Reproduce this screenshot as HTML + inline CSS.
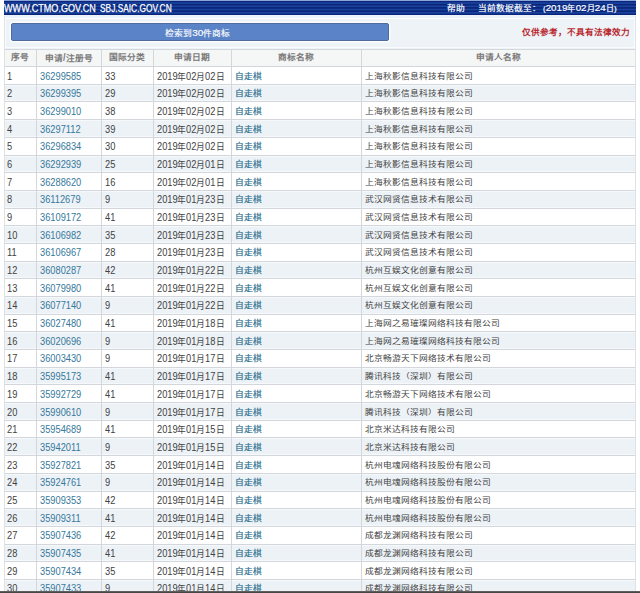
<!DOCTYPE html>
<html lang="zh-CN"><head><meta charset="utf-8">
<style>
html,body{margin:0;padding:0;}
body{width:640px;height:593px;overflow:hidden;position:relative;background:#fff;font-family:"Liberation Sans",sans-serif;}
.a{position:absolute;white-space:nowrap;}
.hb{position:absolute;left:4px;top:1px;width:632px;height:13.8px;background:repeating-linear-gradient(180deg,#0a257a 0px,#0a257a 0.8px,#1a449e 1.8px,#1a449e 2.4px,#0a257a 3.25px);}
.ht{top:2.0px !important;}
.hbtop{position:absolute;left:4px;top:0;width:632px;height:1px;background:#8ba5da;}
.ht{color:#fff;font-size:10.7px;line-height:13.8px;top:1px;}
.panel{position:absolute;left:4px;top:15px;width:631.5px;height:33.7px;background:#eef3f8;}
.btn{position:absolute;left:11px;top:23.4px;width:378px;height:17.4px;background:#5b84c8;border-radius:2px;box-sizing:border-box;border:1px solid #4f6c9c;box-shadow:0 0 0 1.5px #f9fbfe;}
.red{color:#b8282e;font-weight:bold;font-size:8.6px;transform:scaleY(0.88);transform-origin:0 12px;}
.row{position:absolute;left:4px;width:631.5px;}
.hl{position:absolute;left:4px;width:631.5px;height:1px;background:#d3d7db;}
.vl{position:absolute;width:1px;background:#d3d7db;}
.c{position:absolute;font-size:8.72px;color:#424242;}
.lk{color:#36789a;}
.zq{font-weight:normal;color:#357592;-webkit-text-stroke:0.25px #357592;}
.k{display:inline-block;transform:scaleY(0.86);transform-origin:0 12.5px;}
.hd{color:#7a7a7a;text-align:center;font-weight:bold;}
.d{font-size:10.0px;display:inline-block;transform:scaleX(0.9275);transform-origin:0 0;}
</style></head><body>

<div class="hbtop"></div><div class="hb"></div>
<div class="a ht" style="left:3.6px;font-size:10.7px;transform:scaleX(0.849);transform-origin:0 0;-webkit-text-stroke:0.25px #fff">WWW.CTMO.GOV.CN</div>
<div class="a ht" style="left:99.6px;font-size:10.7px;transform:scaleX(0.782);transform-origin:0 0;-webkit-text-stroke:0.25px #fff">SBJ.SAIC.GOV.CN</div>
<div class="a ht" style="left:447px;font-size:8.72px;-webkit-text-stroke:0.2px #fff;transform:scaleY(0.86);transform-origin:0 11px">帮助</div>
<div class="a ht" style="left:478.1px;font-size:8.72px;-webkit-text-stroke:0.2px #fff;transform:scaleY(0.86);transform-origin:0 11px">当前数据截至：</div>
<div class="a ht" style="left:542.5px;font-size:8.72px;transform:scale(0.915,0.9);transform-origin:0 11px;margin-top:-0.9px;-webkit-text-stroke:0.2px #fff">(<span style="font-size:10.7px">2019</span>年<span style="font-size:10.7px">02</span>月<span style="font-size:10.7px">24</span>日)</div>
<div class="panel"></div>
<div class="a" style="left:4px;top:15px;width:631.5px;height:3.2px;background:#e9f3f9"></div>
<div class="a" style="left:4px;top:18.2px;width:631.5px;height:1px;background:#fff"></div>
<div class="btn"></div>
<div class="a" style="left:165.3px;top:23.8px;line-height:17.4px;font-size:8.72px;color:#fff;-webkit-text-stroke:0.15px #fff;transform:scaleY(0.87);transform-origin:0 12px">检索到<span style="font-size:10.0px">30</span>件商标</div>
<div class="a" style="left:4px;top:47.2px;width:631.5px;height:1px;background:#fafcfe"></div>
<div class="a red" style="right:10.399999999999977px;top:24.4px;line-height:17px">仅供参考，不具有法律效力</div>
<div class="row" style="top:48.7px;height:17.39999999999999px;background:#f5f6f6"></div>
<div class="row" style="top:83.78px;height:17.68px;background:#edf2f7;box-shadow:inset 0 2px #f6f9fb, inset 0 -1px #f6f9fb"></div>
<div class="row" style="top:119.15px;height:17.68px;background:#edf2f7;box-shadow:inset 0 2px #f6f9fb, inset 0 -1px #f6f9fb"></div>
<div class="row" style="top:154.52px;height:17.68px;background:#edf2f7;box-shadow:inset 0 2px #f6f9fb, inset 0 -1px #f6f9fb"></div>
<div class="row" style="top:189.89px;height:17.68px;background:#edf2f7;box-shadow:inset 0 2px #f6f9fb, inset 0 -1px #f6f9fb"></div>
<div class="row" style="top:225.26px;height:17.68px;background:#edf2f7;box-shadow:inset 0 2px #f6f9fb, inset 0 -1px #f6f9fb"></div>
<div class="row" style="top:260.62px;height:17.68px;background:#edf2f7;box-shadow:inset 0 2px #f6f9fb, inset 0 -1px #f6f9fb"></div>
<div class="row" style="top:295.99px;height:17.68px;background:#edf2f7;box-shadow:inset 0 2px #f6f9fb, inset 0 -1px #f6f9fb"></div>
<div class="row" style="top:331.36px;height:17.68px;background:#edf2f7;box-shadow:inset 0 2px #f6f9fb, inset 0 -1px #f6f9fb"></div>
<div class="row" style="top:366.73px;height:17.68px;background:#edf2f7;box-shadow:inset 0 2px #f6f9fb, inset 0 -1px #f6f9fb"></div>
<div class="row" style="top:402.10px;height:17.68px;background:#edf2f7;box-shadow:inset 0 2px #f6f9fb, inset 0 -1px #f6f9fb"></div>
<div class="row" style="top:437.46px;height:17.68px;background:#edf2f7;box-shadow:inset 0 2px #f6f9fb, inset 0 -1px #f6f9fb"></div>
<div class="row" style="top:472.83px;height:17.68px;background:#edf2f7;box-shadow:inset 0 2px #f6f9fb, inset 0 -1px #f6f9fb"></div>
<div class="row" style="top:508.20px;height:17.68px;background:#edf2f7;box-shadow:inset 0 2px #f6f9fb, inset 0 -1px #f6f9fb"></div>
<div class="row" style="top:543.57px;height:17.68px;background:#edf2f7;box-shadow:inset 0 2px #f6f9fb, inset 0 -1px #f6f9fb"></div>
<div class="row" style="top:578.94px;height:17.68px;background:#edf2f7;box-shadow:inset 0 2px #f6f9fb, inset 0 -1px #f6f9fb"></div>
<div class="hl" style="top:48.70px"></div>
<div class="hl" style="top:66.10px"></div>
<div class="hl" style="top:83.78px"></div>
<div class="hl" style="top:101.47px"></div>
<div class="hl" style="top:119.15px"></div>
<div class="hl" style="top:136.84px"></div>
<div class="hl" style="top:154.52px"></div>
<div class="hl" style="top:172.20px"></div>
<div class="hl" style="top:189.89px"></div>
<div class="hl" style="top:207.57px"></div>
<div class="hl" style="top:225.26px"></div>
<div class="hl" style="top:242.94px"></div>
<div class="hl" style="top:260.62px"></div>
<div class="hl" style="top:278.31px"></div>
<div class="hl" style="top:295.99px"></div>
<div class="hl" style="top:313.68px"></div>
<div class="hl" style="top:331.36px"></div>
<div class="hl" style="top:349.04px"></div>
<div class="hl" style="top:366.73px"></div>
<div class="hl" style="top:384.41px"></div>
<div class="hl" style="top:402.10px"></div>
<div class="hl" style="top:419.78px"></div>
<div class="hl" style="top:437.46px"></div>
<div class="hl" style="top:455.15px"></div>
<div class="hl" style="top:472.83px"></div>
<div class="hl" style="top:490.52px"></div>
<div class="hl" style="top:508.20px"></div>
<div class="hl" style="top:525.88px"></div>
<div class="hl" style="top:543.57px"></div>
<div class="hl" style="top:561.25px"></div>
<div class="hl" style="top:578.94px"></div>
<div class="hl" style="top:596.62px"></div>
<div class="vl" style="left:36.40px;top:48.70px;height:544.30px"></div>
<div class="vl" style="left:101.20px;top:48.70px;height:544.30px"></div>
<div class="vl" style="left:153.20px;top:48.70px;height:544.30px"></div>
<div class="vl" style="left:231.20px;top:48.70px;height:544.30px"></div>
<div class="vl" style="left:361.30px;top:48.70px;height:544.30px"></div>
<div class="c hd" style="left:4.00px;width:32.40px;top:48.70px;line-height:17.40px"><span class="k">序号</span></div>
<div class="c hd" style="left:36.40px;width:64.80px;top:48.70px;line-height:17.40px"><span class="k">申请</span><span class="d" style="margin-right:-0.202px">/</span><span class="k">注册号</span></div>
<div class="c hd" style="left:101.20px;width:52.00px;top:48.70px;line-height:17.40px"><span class="k">国际分类</span></div>
<div class="c hd" style="left:153.20px;width:78.00px;top:48.70px;line-height:17.40px"><span class="k">申请日期</span></div>
<div class="c hd" style="left:231.20px;width:130.10px;top:48.70px;line-height:17.40px"><span class="k">商标名称</span></div>
<div class="c hd" style="left:361.30px;width:274.20px;top:48.70px;line-height:17.40px"><span class="k">申请人名称</span></div>
<div class="c" style="left:7.30px;top:67.50px;line-height:17.68px"><span class="d" style="margin-right:-0.403px">1</span></div>
<div class="c lk" style="left:39.70px;top:67.50px;line-height:17.68px"><span class="d" style="margin-right:-3.225px">36299585</span></div>
<div class="c" style="left:104.50px;top:67.50px;line-height:17.68px"><span class="d" style="margin-right:-0.806px">33</span></div>
<div class="c" style="left:156.50px;top:67.50px;line-height:17.68px"><span class="d" style="margin-right:-1.612px">2019</span><span class="k2">年</span><span class="d" style="margin-right:-0.806px">02</span><span class="k2">月</span><span class="d" style="margin-right:-0.806px">02</span><span class="k2">日</span></div>
<div class="c lk zq" style="left:234.50px;top:67.50px;line-height:17.68px"><span class="k">自走棋</span></div>
<div class="c" style="left:364.60px;top:67.50px;line-height:17.68px"><span class="k">上海秋影信息科技有限公司</span></div>
<div class="c" style="left:7.30px;top:85.18px;line-height:17.68px"><span class="d" style="margin-right:-0.403px">2</span></div>
<div class="c lk" style="left:39.70px;top:85.18px;line-height:17.68px"><span class="d" style="margin-right:-3.225px">36299395</span></div>
<div class="c" style="left:104.50px;top:85.18px;line-height:17.68px"><span class="d" style="margin-right:-0.806px">29</span></div>
<div class="c" style="left:156.50px;top:85.18px;line-height:17.68px"><span class="d" style="margin-right:-1.612px">2019</span><span class="k2">年</span><span class="d" style="margin-right:-0.806px">02</span><span class="k2">月</span><span class="d" style="margin-right:-0.806px">02</span><span class="k2">日</span></div>
<div class="c lk zq" style="left:234.50px;top:85.18px;line-height:17.68px"><span class="k">自走棋</span></div>
<div class="c" style="left:364.60px;top:85.18px;line-height:17.68px"><span class="k">上海秋影信息科技有限公司</span></div>
<div class="c" style="left:7.30px;top:102.87px;line-height:17.68px"><span class="d" style="margin-right:-0.403px">3</span></div>
<div class="c lk" style="left:39.70px;top:102.87px;line-height:17.68px"><span class="d" style="margin-right:-3.225px">36299010</span></div>
<div class="c" style="left:104.50px;top:102.87px;line-height:17.68px"><span class="d" style="margin-right:-0.806px">38</span></div>
<div class="c" style="left:156.50px;top:102.87px;line-height:17.68px"><span class="d" style="margin-right:-1.612px">2019</span><span class="k2">年</span><span class="d" style="margin-right:-0.806px">02</span><span class="k2">月</span><span class="d" style="margin-right:-0.806px">02</span><span class="k2">日</span></div>
<div class="c lk zq" style="left:234.50px;top:102.87px;line-height:17.68px"><span class="k">自走棋</span></div>
<div class="c" style="left:364.60px;top:102.87px;line-height:17.68px"><span class="k">上海秋影信息科技有限公司</span></div>
<div class="c" style="left:7.30px;top:120.55px;line-height:17.68px"><span class="d" style="margin-right:-0.403px">4</span></div>
<div class="c lk" style="left:39.70px;top:120.55px;line-height:17.68px"><span class="d" style="margin-right:-3.225px">36297112</span></div>
<div class="c" style="left:104.50px;top:120.55px;line-height:17.68px"><span class="d" style="margin-right:-0.806px">39</span></div>
<div class="c" style="left:156.50px;top:120.55px;line-height:17.68px"><span class="d" style="margin-right:-1.612px">2019</span><span class="k2">年</span><span class="d" style="margin-right:-0.806px">02</span><span class="k2">月</span><span class="d" style="margin-right:-0.806px">02</span><span class="k2">日</span></div>
<div class="c lk zq" style="left:234.50px;top:120.55px;line-height:17.68px"><span class="k">自走棋</span></div>
<div class="c" style="left:364.60px;top:120.55px;line-height:17.68px"><span class="k">上海秋影信息科技有限公司</span></div>
<div class="c" style="left:7.30px;top:138.24px;line-height:17.68px"><span class="d" style="margin-right:-0.403px">5</span></div>
<div class="c lk" style="left:39.70px;top:138.24px;line-height:17.68px"><span class="d" style="margin-right:-3.225px">36296834</span></div>
<div class="c" style="left:104.50px;top:138.24px;line-height:17.68px"><span class="d" style="margin-right:-0.806px">30</span></div>
<div class="c" style="left:156.50px;top:138.24px;line-height:17.68px"><span class="d" style="margin-right:-1.612px">2019</span><span class="k2">年</span><span class="d" style="margin-right:-0.806px">02</span><span class="k2">月</span><span class="d" style="margin-right:-0.806px">02</span><span class="k2">日</span></div>
<div class="c lk zq" style="left:234.50px;top:138.24px;line-height:17.68px"><span class="k">自走棋</span></div>
<div class="c" style="left:364.60px;top:138.24px;line-height:17.68px"><span class="k">上海秋影信息科技有限公司</span></div>
<div class="c" style="left:7.30px;top:155.92px;line-height:17.68px"><span class="d" style="margin-right:-0.403px">6</span></div>
<div class="c lk" style="left:39.70px;top:155.92px;line-height:17.68px"><span class="d" style="margin-right:-3.225px">36292939</span></div>
<div class="c" style="left:104.50px;top:155.92px;line-height:17.68px"><span class="d" style="margin-right:-0.806px">25</span></div>
<div class="c" style="left:156.50px;top:155.92px;line-height:17.68px"><span class="d" style="margin-right:-1.612px">2019</span><span class="k2">年</span><span class="d" style="margin-right:-0.806px">02</span><span class="k2">月</span><span class="d" style="margin-right:-0.806px">01</span><span class="k2">日</span></div>
<div class="c lk zq" style="left:234.50px;top:155.92px;line-height:17.68px"><span class="k">自走棋</span></div>
<div class="c" style="left:364.60px;top:155.92px;line-height:17.68px"><span class="k">上海秋影信息科技有限公司</span></div>
<div class="c" style="left:7.30px;top:173.60px;line-height:17.68px"><span class="d" style="margin-right:-0.403px">7</span></div>
<div class="c lk" style="left:39.70px;top:173.60px;line-height:17.68px"><span class="d" style="margin-right:-3.225px">36288620</span></div>
<div class="c" style="left:104.50px;top:173.60px;line-height:17.68px"><span class="d" style="margin-right:-0.806px">16</span></div>
<div class="c" style="left:156.50px;top:173.60px;line-height:17.68px"><span class="d" style="margin-right:-1.612px">2019</span><span class="k2">年</span><span class="d" style="margin-right:-0.806px">02</span><span class="k2">月</span><span class="d" style="margin-right:-0.806px">01</span><span class="k2">日</span></div>
<div class="c lk zq" style="left:234.50px;top:173.60px;line-height:17.68px"><span class="k">自走棋</span></div>
<div class="c" style="left:364.60px;top:173.60px;line-height:17.68px"><span class="k">上海秋影信息科技有限公司</span></div>
<div class="c" style="left:7.30px;top:191.29px;line-height:17.68px"><span class="d" style="margin-right:-0.403px">8</span></div>
<div class="c lk" style="left:39.70px;top:191.29px;line-height:17.68px"><span class="d" style="margin-right:-3.225px">36112679</span></div>
<div class="c" style="left:104.50px;top:191.29px;line-height:17.68px"><span class="d" style="margin-right:-0.403px">9</span></div>
<div class="c" style="left:156.50px;top:191.29px;line-height:17.68px"><span class="d" style="margin-right:-1.612px">2019</span><span class="k2">年</span><span class="d" style="margin-right:-0.806px">01</span><span class="k2">月</span><span class="d" style="margin-right:-0.806px">23</span><span class="k2">日</span></div>
<div class="c lk zq" style="left:234.50px;top:191.29px;line-height:17.68px"><span class="k">自走棋</span></div>
<div class="c" style="left:364.60px;top:191.29px;line-height:17.68px"><span class="k">武汉网贤信息技术有限公司</span></div>
<div class="c" style="left:7.30px;top:208.97px;line-height:17.68px"><span class="d" style="margin-right:-0.403px">9</span></div>
<div class="c lk" style="left:39.70px;top:208.97px;line-height:17.68px"><span class="d" style="margin-right:-3.225px">36109172</span></div>
<div class="c" style="left:104.50px;top:208.97px;line-height:17.68px"><span class="d" style="margin-right:-0.806px">41</span></div>
<div class="c" style="left:156.50px;top:208.97px;line-height:17.68px"><span class="d" style="margin-right:-1.612px">2019</span><span class="k2">年</span><span class="d" style="margin-right:-0.806px">01</span><span class="k2">月</span><span class="d" style="margin-right:-0.806px">23</span><span class="k2">日</span></div>
<div class="c lk zq" style="left:234.50px;top:208.97px;line-height:17.68px"><span class="k">自走棋</span></div>
<div class="c" style="left:364.60px;top:208.97px;line-height:17.68px"><span class="k">武汉网贤信息技术有限公司</span></div>
<div class="c" style="left:7.30px;top:226.66px;line-height:17.68px"><span class="d" style="margin-right:-0.806px">10</span></div>
<div class="c lk" style="left:39.70px;top:226.66px;line-height:17.68px"><span class="d" style="margin-right:-3.225px">36106982</span></div>
<div class="c" style="left:104.50px;top:226.66px;line-height:17.68px"><span class="d" style="margin-right:-0.806px">35</span></div>
<div class="c" style="left:156.50px;top:226.66px;line-height:17.68px"><span class="d" style="margin-right:-1.612px">2019</span><span class="k2">年</span><span class="d" style="margin-right:-0.806px">01</span><span class="k2">月</span><span class="d" style="margin-right:-0.806px">23</span><span class="k2">日</span></div>
<div class="c lk zq" style="left:234.50px;top:226.66px;line-height:17.68px"><span class="k">自走棋</span></div>
<div class="c" style="left:364.60px;top:226.66px;line-height:17.68px"><span class="k">武汉网贤信息技术有限公司</span></div>
<div class="c" style="left:7.30px;top:244.34px;line-height:17.68px"><span class="d" style="margin-right:-0.806px">11</span></div>
<div class="c lk" style="left:39.70px;top:244.34px;line-height:17.68px"><span class="d" style="margin-right:-3.225px">36106967</span></div>
<div class="c" style="left:104.50px;top:244.34px;line-height:17.68px"><span class="d" style="margin-right:-0.806px">28</span></div>
<div class="c" style="left:156.50px;top:244.34px;line-height:17.68px"><span class="d" style="margin-right:-1.612px">2019</span><span class="k2">年</span><span class="d" style="margin-right:-0.806px">01</span><span class="k2">月</span><span class="d" style="margin-right:-0.806px">23</span><span class="k2">日</span></div>
<div class="c lk zq" style="left:234.50px;top:244.34px;line-height:17.68px"><span class="k">自走棋</span></div>
<div class="c" style="left:364.60px;top:244.34px;line-height:17.68px"><span class="k">武汉网贤信息技术有限公司</span></div>
<div class="c" style="left:7.30px;top:262.02px;line-height:17.68px"><span class="d" style="margin-right:-0.806px">12</span></div>
<div class="c lk" style="left:39.70px;top:262.02px;line-height:17.68px"><span class="d" style="margin-right:-3.225px">36080287</span></div>
<div class="c" style="left:104.50px;top:262.02px;line-height:17.68px"><span class="d" style="margin-right:-0.806px">42</span></div>
<div class="c" style="left:156.50px;top:262.02px;line-height:17.68px"><span class="d" style="margin-right:-1.612px">2019</span><span class="k2">年</span><span class="d" style="margin-right:-0.806px">01</span><span class="k2">月</span><span class="d" style="margin-right:-0.806px">22</span><span class="k2">日</span></div>
<div class="c lk zq" style="left:234.50px;top:262.02px;line-height:17.68px"><span class="k">自走棋</span></div>
<div class="c" style="left:364.60px;top:262.02px;line-height:17.68px"><span class="k">杭州互娱文化创意有限公司</span></div>
<div class="c" style="left:7.30px;top:279.71px;line-height:17.68px"><span class="d" style="margin-right:-0.806px">13</span></div>
<div class="c lk" style="left:39.70px;top:279.71px;line-height:17.68px"><span class="d" style="margin-right:-3.225px">36079980</span></div>
<div class="c" style="left:104.50px;top:279.71px;line-height:17.68px"><span class="d" style="margin-right:-0.806px">41</span></div>
<div class="c" style="left:156.50px;top:279.71px;line-height:17.68px"><span class="d" style="margin-right:-1.612px">2019</span><span class="k2">年</span><span class="d" style="margin-right:-0.806px">01</span><span class="k2">月</span><span class="d" style="margin-right:-0.806px">22</span><span class="k2">日</span></div>
<div class="c lk zq" style="left:234.50px;top:279.71px;line-height:17.68px"><span class="k">自走棋</span></div>
<div class="c" style="left:364.60px;top:279.71px;line-height:17.68px"><span class="k">杭州互娱文化创意有限公司</span></div>
<div class="c" style="left:7.30px;top:297.39px;line-height:17.68px"><span class="d" style="margin-right:-0.806px">14</span></div>
<div class="c lk" style="left:39.70px;top:297.39px;line-height:17.68px"><span class="d" style="margin-right:-3.225px">36077140</span></div>
<div class="c" style="left:104.50px;top:297.39px;line-height:17.68px"><span class="d" style="margin-right:-0.403px">9</span></div>
<div class="c" style="left:156.50px;top:297.39px;line-height:17.68px"><span class="d" style="margin-right:-1.612px">2019</span><span class="k2">年</span><span class="d" style="margin-right:-0.806px">01</span><span class="k2">月</span><span class="d" style="margin-right:-0.806px">22</span><span class="k2">日</span></div>
<div class="c lk zq" style="left:234.50px;top:297.39px;line-height:17.68px"><span class="k">自走棋</span></div>
<div class="c" style="left:364.60px;top:297.39px;line-height:17.68px"><span class="k">杭州互娱文化创意有限公司</span></div>
<div class="c" style="left:7.30px;top:315.08px;line-height:17.68px"><span class="d" style="margin-right:-0.806px">15</span></div>
<div class="c lk" style="left:39.70px;top:315.08px;line-height:17.68px"><span class="d" style="margin-right:-3.225px">36027480</span></div>
<div class="c" style="left:104.50px;top:315.08px;line-height:17.68px"><span class="d" style="margin-right:-0.806px">41</span></div>
<div class="c" style="left:156.50px;top:315.08px;line-height:17.68px"><span class="d" style="margin-right:-1.612px">2019</span><span class="k2">年</span><span class="d" style="margin-right:-0.806px">01</span><span class="k2">月</span><span class="d" style="margin-right:-0.806px">18</span><span class="k2">日</span></div>
<div class="c lk zq" style="left:234.50px;top:315.08px;line-height:17.68px"><span class="k">自走棋</span></div>
<div class="c" style="left:364.60px;top:315.08px;line-height:17.68px"><span class="k">上海网之易璀璨网络科技有限公司</span></div>
<div class="c" style="left:7.30px;top:332.76px;line-height:17.68px"><span class="d" style="margin-right:-0.806px">16</span></div>
<div class="c lk" style="left:39.70px;top:332.76px;line-height:17.68px"><span class="d" style="margin-right:-3.225px">36020696</span></div>
<div class="c" style="left:104.50px;top:332.76px;line-height:17.68px"><span class="d" style="margin-right:-0.403px">9</span></div>
<div class="c" style="left:156.50px;top:332.76px;line-height:17.68px"><span class="d" style="margin-right:-1.612px">2019</span><span class="k2">年</span><span class="d" style="margin-right:-0.806px">01</span><span class="k2">月</span><span class="d" style="margin-right:-0.806px">18</span><span class="k2">日</span></div>
<div class="c lk zq" style="left:234.50px;top:332.76px;line-height:17.68px"><span class="k">自走棋</span></div>
<div class="c" style="left:364.60px;top:332.76px;line-height:17.68px"><span class="k">上海网之易璀璨网络科技有限公司</span></div>
<div class="c" style="left:7.30px;top:350.44px;line-height:17.68px"><span class="d" style="margin-right:-0.806px">17</span></div>
<div class="c lk" style="left:39.70px;top:350.44px;line-height:17.68px"><span class="d" style="margin-right:-3.225px">36003430</span></div>
<div class="c" style="left:104.50px;top:350.44px;line-height:17.68px"><span class="d" style="margin-right:-0.403px">9</span></div>
<div class="c" style="left:156.50px;top:350.44px;line-height:17.68px"><span class="d" style="margin-right:-1.612px">2019</span><span class="k2">年</span><span class="d" style="margin-right:-0.806px">01</span><span class="k2">月</span><span class="d" style="margin-right:-0.806px">17</span><span class="k2">日</span></div>
<div class="c lk zq" style="left:234.50px;top:350.44px;line-height:17.68px"><span class="k">自走棋</span></div>
<div class="c" style="left:364.60px;top:350.44px;line-height:17.68px"><span class="k">北京畅游天下网络技术有限公司</span></div>
<div class="c" style="left:7.30px;top:368.13px;line-height:17.68px"><span class="d" style="margin-right:-0.806px">18</span></div>
<div class="c lk" style="left:39.70px;top:368.13px;line-height:17.68px"><span class="d" style="margin-right:-3.225px">35995173</span></div>
<div class="c" style="left:104.50px;top:368.13px;line-height:17.68px"><span class="d" style="margin-right:-0.806px">41</span></div>
<div class="c" style="left:156.50px;top:368.13px;line-height:17.68px"><span class="d" style="margin-right:-1.612px">2019</span><span class="k2">年</span><span class="d" style="margin-right:-0.806px">01</span><span class="k2">月</span><span class="d" style="margin-right:-0.806px">17</span><span class="k2">日</span></div>
<div class="c lk zq" style="left:234.50px;top:368.13px;line-height:17.68px"><span class="k">自走棋</span></div>
<div class="c" style="left:364.60px;top:368.13px;line-height:17.68px"><span class="k">腾讯科技（深圳）有限公司</span></div>
<div class="c" style="left:7.30px;top:385.81px;line-height:17.68px"><span class="d" style="margin-right:-0.806px">19</span></div>
<div class="c lk" style="left:39.70px;top:385.81px;line-height:17.68px"><span class="d" style="margin-right:-3.225px">35992729</span></div>
<div class="c" style="left:104.50px;top:385.81px;line-height:17.68px"><span class="d" style="margin-right:-0.806px">41</span></div>
<div class="c" style="left:156.50px;top:385.81px;line-height:17.68px"><span class="d" style="margin-right:-1.612px">2019</span><span class="k2">年</span><span class="d" style="margin-right:-0.806px">01</span><span class="k2">月</span><span class="d" style="margin-right:-0.806px">17</span><span class="k2">日</span></div>
<div class="c lk zq" style="left:234.50px;top:385.81px;line-height:17.68px"><span class="k">自走棋</span></div>
<div class="c" style="left:364.60px;top:385.81px;line-height:17.68px"><span class="k">北京畅游天下网络技术有限公司</span></div>
<div class="c" style="left:7.30px;top:403.50px;line-height:17.68px"><span class="d" style="margin-right:-0.806px">20</span></div>
<div class="c lk" style="left:39.70px;top:403.50px;line-height:17.68px"><span class="d" style="margin-right:-3.225px">35990610</span></div>
<div class="c" style="left:104.50px;top:403.50px;line-height:17.68px"><span class="d" style="margin-right:-0.403px">9</span></div>
<div class="c" style="left:156.50px;top:403.50px;line-height:17.68px"><span class="d" style="margin-right:-1.612px">2019</span><span class="k2">年</span><span class="d" style="margin-right:-0.806px">01</span><span class="k2">月</span><span class="d" style="margin-right:-0.806px">17</span><span class="k2">日</span></div>
<div class="c lk zq" style="left:234.50px;top:403.50px;line-height:17.68px"><span class="k">自走棋</span></div>
<div class="c" style="left:364.60px;top:403.50px;line-height:17.68px"><span class="k">腾讯科技（深圳）有限公司</span></div>
<div class="c" style="left:7.30px;top:421.18px;line-height:17.68px"><span class="d" style="margin-right:-0.806px">21</span></div>
<div class="c lk" style="left:39.70px;top:421.18px;line-height:17.68px"><span class="d" style="margin-right:-3.225px">35954689</span></div>
<div class="c" style="left:104.50px;top:421.18px;line-height:17.68px"><span class="d" style="margin-right:-0.806px">41</span></div>
<div class="c" style="left:156.50px;top:421.18px;line-height:17.68px"><span class="d" style="margin-right:-1.612px">2019</span><span class="k2">年</span><span class="d" style="margin-right:-0.806px">01</span><span class="k2">月</span><span class="d" style="margin-right:-0.806px">15</span><span class="k2">日</span></div>
<div class="c lk zq" style="left:234.50px;top:421.18px;line-height:17.68px"><span class="k">自走棋</span></div>
<div class="c" style="left:364.60px;top:421.18px;line-height:17.68px"><span class="k">北京米达科技有限公司</span></div>
<div class="c" style="left:7.30px;top:438.86px;line-height:17.68px"><span class="d" style="margin-right:-0.806px">22</span></div>
<div class="c lk" style="left:39.70px;top:438.86px;line-height:17.68px"><span class="d" style="margin-right:-3.225px">35942011</span></div>
<div class="c" style="left:104.50px;top:438.86px;line-height:17.68px"><span class="d" style="margin-right:-0.403px">9</span></div>
<div class="c" style="left:156.50px;top:438.86px;line-height:17.68px"><span class="d" style="margin-right:-1.612px">2019</span><span class="k2">年</span><span class="d" style="margin-right:-0.806px">01</span><span class="k2">月</span><span class="d" style="margin-right:-0.806px">15</span><span class="k2">日</span></div>
<div class="c lk zq" style="left:234.50px;top:438.86px;line-height:17.68px"><span class="k">自走棋</span></div>
<div class="c" style="left:364.60px;top:438.86px;line-height:17.68px"><span class="k">北京米达科技有限公司</span></div>
<div class="c" style="left:7.30px;top:456.55px;line-height:17.68px"><span class="d" style="margin-right:-0.806px">23</span></div>
<div class="c lk" style="left:39.70px;top:456.55px;line-height:17.68px"><span class="d" style="margin-right:-3.225px">35927821</span></div>
<div class="c" style="left:104.50px;top:456.55px;line-height:17.68px"><span class="d" style="margin-right:-0.806px">35</span></div>
<div class="c" style="left:156.50px;top:456.55px;line-height:17.68px"><span class="d" style="margin-right:-1.612px">2019</span><span class="k2">年</span><span class="d" style="margin-right:-0.806px">01</span><span class="k2">月</span><span class="d" style="margin-right:-0.806px">14</span><span class="k2">日</span></div>
<div class="c lk zq" style="left:234.50px;top:456.55px;line-height:17.68px"><span class="k">自走棋</span></div>
<div class="c" style="left:364.60px;top:456.55px;line-height:17.68px"><span class="k">杭州电魂网络科技股份有限公司</span></div>
<div class="c" style="left:7.30px;top:474.23px;line-height:17.68px"><span class="d" style="margin-right:-0.806px">24</span></div>
<div class="c lk" style="left:39.70px;top:474.23px;line-height:17.68px"><span class="d" style="margin-right:-3.225px">35924761</span></div>
<div class="c" style="left:104.50px;top:474.23px;line-height:17.68px"><span class="d" style="margin-right:-0.403px">9</span></div>
<div class="c" style="left:156.50px;top:474.23px;line-height:17.68px"><span class="d" style="margin-right:-1.612px">2019</span><span class="k2">年</span><span class="d" style="margin-right:-0.806px">01</span><span class="k2">月</span><span class="d" style="margin-right:-0.806px">14</span><span class="k2">日</span></div>
<div class="c lk zq" style="left:234.50px;top:474.23px;line-height:17.68px"><span class="k">自走棋</span></div>
<div class="c" style="left:364.60px;top:474.23px;line-height:17.68px"><span class="k">杭州电魂网络科技股份有限公司</span></div>
<div class="c" style="left:7.30px;top:491.92px;line-height:17.68px"><span class="d" style="margin-right:-0.806px">25</span></div>
<div class="c lk" style="left:39.70px;top:491.92px;line-height:17.68px"><span class="d" style="margin-right:-3.225px">35909353</span></div>
<div class="c" style="left:104.50px;top:491.92px;line-height:17.68px"><span class="d" style="margin-right:-0.806px">42</span></div>
<div class="c" style="left:156.50px;top:491.92px;line-height:17.68px"><span class="d" style="margin-right:-1.612px">2019</span><span class="k2">年</span><span class="d" style="margin-right:-0.806px">01</span><span class="k2">月</span><span class="d" style="margin-right:-0.806px">14</span><span class="k2">日</span></div>
<div class="c lk zq" style="left:234.50px;top:491.92px;line-height:17.68px"><span class="k">自走棋</span></div>
<div class="c" style="left:364.60px;top:491.92px;line-height:17.68px"><span class="k">杭州电魂网络科技股份有限公司</span></div>
<div class="c" style="left:7.30px;top:509.60px;line-height:17.68px"><span class="d" style="margin-right:-0.806px">26</span></div>
<div class="c lk" style="left:39.70px;top:509.60px;line-height:17.68px"><span class="d" style="margin-right:-3.225px">35909311</span></div>
<div class="c" style="left:104.50px;top:509.60px;line-height:17.68px"><span class="d" style="margin-right:-0.806px">41</span></div>
<div class="c" style="left:156.50px;top:509.60px;line-height:17.68px"><span class="d" style="margin-right:-1.612px">2019</span><span class="k2">年</span><span class="d" style="margin-right:-0.806px">01</span><span class="k2">月</span><span class="d" style="margin-right:-0.806px">14</span><span class="k2">日</span></div>
<div class="c lk zq" style="left:234.50px;top:509.60px;line-height:17.68px"><span class="k">自走棋</span></div>
<div class="c" style="left:364.60px;top:509.60px;line-height:17.68px"><span class="k">杭州电魂网络科技股份有限公司</span></div>
<div class="c" style="left:7.30px;top:527.28px;line-height:17.68px"><span class="d" style="margin-right:-0.806px">27</span></div>
<div class="c lk" style="left:39.70px;top:527.28px;line-height:17.68px"><span class="d" style="margin-right:-3.225px">35907436</span></div>
<div class="c" style="left:104.50px;top:527.28px;line-height:17.68px"><span class="d" style="margin-right:-0.806px">42</span></div>
<div class="c" style="left:156.50px;top:527.28px;line-height:17.68px"><span class="d" style="margin-right:-1.612px">2019</span><span class="k2">年</span><span class="d" style="margin-right:-0.806px">01</span><span class="k2">月</span><span class="d" style="margin-right:-0.806px">14</span><span class="k2">日</span></div>
<div class="c lk zq" style="left:234.50px;top:527.28px;line-height:17.68px"><span class="k">自走棋</span></div>
<div class="c" style="left:364.60px;top:527.28px;line-height:17.68px"><span class="k">成都龙渊网络科技有限公司</span></div>
<div class="c" style="left:7.30px;top:544.97px;line-height:17.68px"><span class="d" style="margin-right:-0.806px">28</span></div>
<div class="c lk" style="left:39.70px;top:544.97px;line-height:17.68px"><span class="d" style="margin-right:-3.225px">35907435</span></div>
<div class="c" style="left:104.50px;top:544.97px;line-height:17.68px"><span class="d" style="margin-right:-0.806px">41</span></div>
<div class="c" style="left:156.50px;top:544.97px;line-height:17.68px"><span class="d" style="margin-right:-1.612px">2019</span><span class="k2">年</span><span class="d" style="margin-right:-0.806px">01</span><span class="k2">月</span><span class="d" style="margin-right:-0.806px">14</span><span class="k2">日</span></div>
<div class="c lk zq" style="left:234.50px;top:544.97px;line-height:17.68px"><span class="k">自走棋</span></div>
<div class="c" style="left:364.60px;top:544.97px;line-height:17.68px"><span class="k">成都龙渊网络科技有限公司</span></div>
<div class="c" style="left:7.30px;top:562.65px;line-height:17.68px"><span class="d" style="margin-right:-0.806px">29</span></div>
<div class="c lk" style="left:39.70px;top:562.65px;line-height:17.68px"><span class="d" style="margin-right:-3.225px">35907434</span></div>
<div class="c" style="left:104.50px;top:562.65px;line-height:17.68px"><span class="d" style="margin-right:-0.806px">35</span></div>
<div class="c" style="left:156.50px;top:562.65px;line-height:17.68px"><span class="d" style="margin-right:-1.612px">2019</span><span class="k2">年</span><span class="d" style="margin-right:-0.806px">01</span><span class="k2">月</span><span class="d" style="margin-right:-0.806px">14</span><span class="k2">日</span></div>
<div class="c lk zq" style="left:234.50px;top:562.65px;line-height:17.68px"><span class="k">自走棋</span></div>
<div class="c" style="left:364.60px;top:562.65px;line-height:17.68px"><span class="k">成都龙渊网络科技有限公司</span></div>
<div class="c" style="left:7.30px;top:580.34px;line-height:17.68px"><span class="d" style="margin-right:-0.806px">30</span></div>
<div class="c lk" style="left:39.70px;top:580.34px;line-height:17.68px"><span class="d" style="margin-right:-3.225px">35907433</span></div>
<div class="c" style="left:104.50px;top:580.34px;line-height:17.68px"><span class="d" style="margin-right:-0.403px">9</span></div>
<div class="c" style="left:156.50px;top:580.34px;line-height:17.68px"><span class="d" style="margin-right:-1.612px">2019</span><span class="k2">年</span><span class="d" style="margin-right:-0.806px">01</span><span class="k2">月</span><span class="d" style="margin-right:-0.806px">14</span><span class="k2">日</span></div>
<div class="c lk zq" style="left:234.50px;top:580.34px;line-height:17.68px"><span class="k">自走棋</span></div>
<div class="c" style="left:364.60px;top:580.34px;line-height:17.68px"><span class="k">成都龙渊网络科技有限公司</span></div>
<div class="a" style="left:4px;top:16px;width:1px;height:578px;background:#dde2e7"></div>
<div class="a" style="left:635px;top:16px;width:1px;height:578px;background:#dde2e7"></div>
<div class="a" style="left:5px;top:18.2px;width:1px;height:29.000000000000004px;background:#fafcfe"></div>
<div class="a" style="left:634px;top:18.2px;width:1px;height:29.000000000000004px;background:#fafcfe"></div>
<div class="a" style="left:0;top:591px;width:640px;height:2px;background:linear-gradient(#6a6a6a,#3a3a3a)"></div>
</body></html>
